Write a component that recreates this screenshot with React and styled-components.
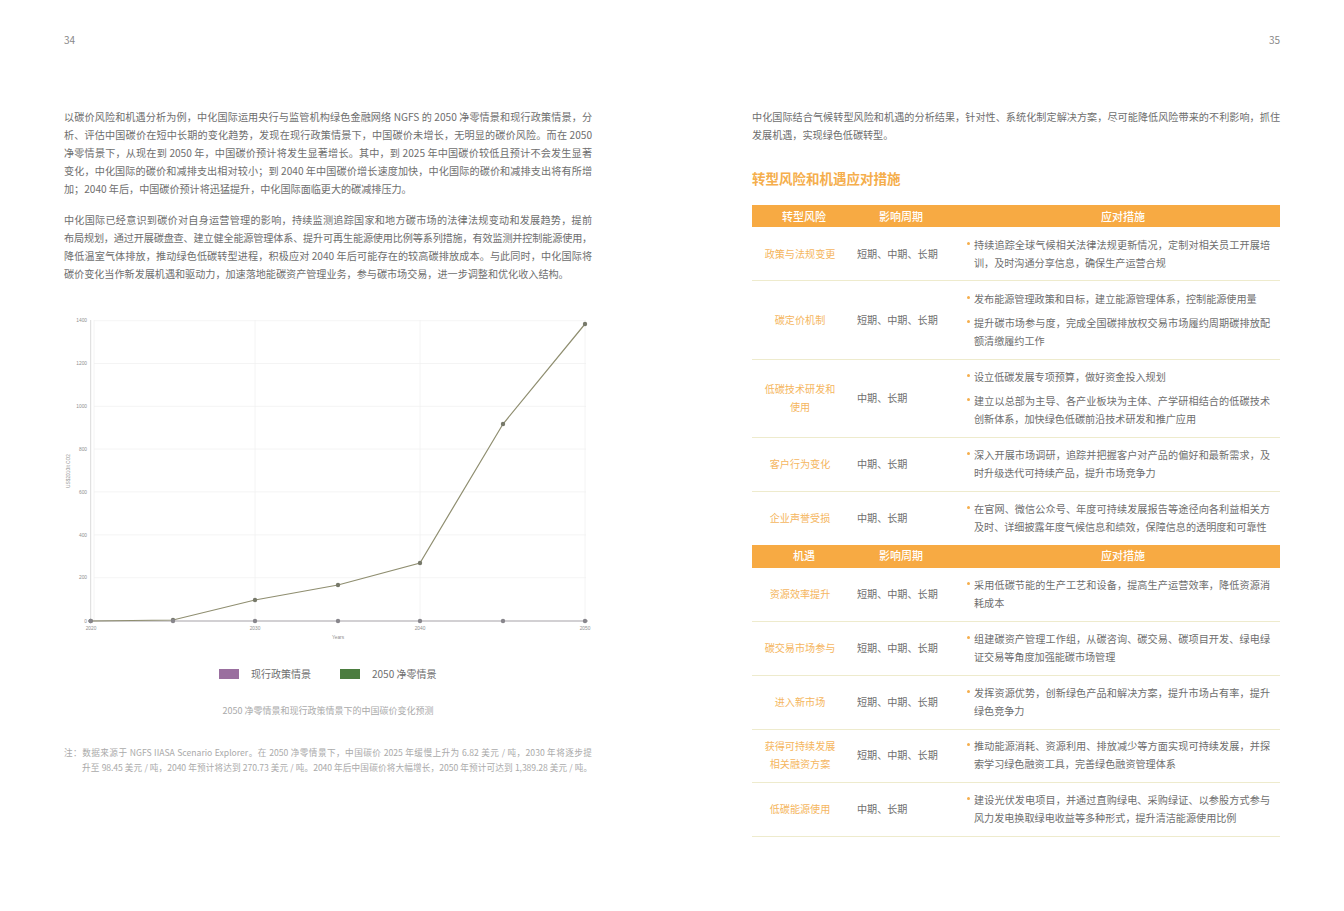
import React from "react";
import styled, { createGlobalStyle } from "styled-components";

const Global = createGlobalStyle`
  html, body { margin: 0; padding: 0; background: #fff; }
  body { font-family: "Noto Sans CJK SC", "Noto Sans", sans-serif; }
`;

const Spread = styled.div`
  display: flex;
  width: 1344px;
  height: 911px;
  overflow: hidden;
  background: #fff;
`;
const Page = styled.section`
  width: 672px;
  box-sizing: border-box;
  padding: ${(p) => (p.$right ? "32px 64px 0 80px" : "32px 80px 0 64px")};
`;
const PageNo = styled.div`
  font-size: 10px;
  line-height: 16px;
  color: #888;
  text-align: ${(p) => (p.$right ? "right" : "left")};
  margin-bottom: 60px;
`;
const Para = styled.p`
  margin: 0 0 13px;
  font-size: 10.1px;
  line-height: 18px;
  color: #6e6e6e;
  text-align: justify;
`;
const ParaLine = styled.span`
  display: block;
  letter-spacing: ${(p) => p.$track || 0}px;
  text-align-last: ${(p) => (p.$last ? "left" : "justify")};
`;
const ChartSvg = styled.svg`
  display: block;
  width: 528px;
  height: 340px;
  margin-top: 22px;
`;
const Legend = styled.div`
  display: flex;
  align-items: center;
  margin: 20px 0 0 155px;
  height: 16px;
`;
const LegendItem = styled.div`
  display: flex;
  align-items: center;
  gap: 12px;
  width: ${(p) => p.$w}px;
  font-size: 10px;
  color: #6e6e6e;
`;
const Swatch = styled.span`
  width: 20px;
  height: 10px;
  margin-top: 1px;
  background: ${(p) => p.$c};
`;
const Caption = styled.div`
  margin-top: 22px;
  font-size: 9px;
  line-height: 16px;
  color: #aaa;
  text-align: center;
`;
const Note = styled.div`
  margin-top: 26px;
  font-size: 8.65px;
  line-height: 15px;
  color: #aaa;
`;
const NoteLine = styled.div`
  padding-left: ${(p) => p.$indent}px;
  letter-spacing: ${(p) => p.$track}px;
  text-align: justify;
  text-align-last: justify;
`;
const Title = styled.h2`
  margin: 24px 0 17px;
  font-size: 13.5px;
  line-height: 20px;
  font-weight: 700;
  color: #f5ae4c;
`;
const HeadRow = styled.div`
  display: grid;
  grid-template-columns: 104px 110px 314px;
  box-sizing: border-box;
  height: ${(p) => p.$h}px;
  padding-bottom: ${(p) => p.$lift}px;
  align-items: center;
  background: #f7aa43;
  color: #fff;
  font-size: 11px;
  font-weight: 500;
  text-align: center;
`;
const HeadPeriod = styled.div`
  padding-right: 20px;
`;
const Row = styled.div`
  display: grid;
  grid-template-columns: 104px 110px 314px;
  align-items: center;
  box-sizing: border-box;
  height: ${(p) => p.$h}px;
  padding-bottom: ${(p) => p.$lift}px;
  border-bottom: ${(p) => (p.$plain ? "0" : "1px solid #eeebcd")};
  font-size: 10.1px;
  line-height: 18px;
  color: #6e6e6e;
`;
const Risk = styled.div`
  padding-right: 8px;
  color: #f5b660;
  text-align: center;
`;
const Period = styled.div`
  padding-left: 1px;
`;
const Measures = styled.div`
  display: flex;
  flex-direction: column;
  gap: 6px;
  padding-right: 10px;
`;
const Measure = styled.div`
  display: flex;
  gap: 4px;
`;
const Dot = styled.span`
  flex: none;
  width: 3px;
  height: 3px;
  margin: 6px 0 0 1px;
  border-radius: 50%;
  background: #f5ae4c;
`;
const MeasureText = styled.span`
  flex: 1;
  text-align: justify;
`;
const TickText = styled.text`
  font-size: 4.8px;
  fill: #8f8f8f;
  font-family: "Liberation Sans", sans-serif;
`;

const points = [[90.7, 621], [173, 620], [255, 600], [338, 585], [420, 563], [503, 424], [585, 324]];
const ticks = [[320.7, "1400"], [363.5, "1200"], [406.3, "1000"], [449, "800"], [491.8, "600"], [534.8, "400"], [577.7, "200"], [621, "0"]];

function Chart() {
  return (
    <ChartSvg viewBox="64 305 528 340">
      {ticks.slice(0, 7).map(([y]) => (
        <line key={y} x1="94" x2="586" y1={y} y2={y} stroke="#f1f1f1" strokeWidth="0.8" />
      ))}
      {[94, 255, 420, 585].map((x) => (
        <line key={x} x1={x} x2={x} y1="320" y2="621" stroke="#f1f1f1" strokeWidth="0.8" />
      ))}
      <line x1="90.7" x2="90.7" y1="320" y2="623" stroke="#cfcfcf" strokeWidth="0.8" />
      <line x1="88" x2="588" y1="621" y2="621" stroke="#a5a2a8" strokeWidth="1.2" />
      {ticks.map(([y, t]) => (
        <TickText key={t} x="87" y={y + 1.7} textAnchor="end">{t}</TickText>
      ))}
      {[[91, "2020"], [255, "2030"], [420, "2040"], [585, "2050"]].map(([x, t]) => (
        <TickText key={t} x={x} y="629.5" textAnchor="middle">{t}</TickText>
      ))}
      <TickText x="338" y="639" textAnchor="middle">Years</TickText>
      <TickText x="0" y="0" textAnchor="middle" transform="translate(69.5 471) rotate(-90)">US$2010/t CO2</TickText>
      <polyline points={points.map((p) => p.join(",")).join(" ")} fill="none" stroke="#8f8e70" strokeWidth="1.2" />
      {points.map(([x, y]) => (
        <circle key={x} cx={x} cy={y} r="2.2" fill="#77796a" />
      ))}
      {points.map(([x]) => (
        <circle key={x} cx={x} cy="621" r="2.2" fill="#88868c" />
      ))}
    </ChartSvg>
  );
}

const S = "短期、中期、长期";
const M = "中期、长期";
const groupA = [
  { h: 54, lift: 0, risk: ["政策与法规变更"], period: S, items: ["持续追踪全球气候相关法律法规更新情况，定制对相关员工开展培训，及时沟通分享信息，确保生产运营合规"] },
  { h: 79, lift: 0, risk: ["碳定价机制"], period: S, items: ["发布能源管理政策和目标，建立能源管理体系，控制能源使用量", "提升碳市场参与度，完成全国碳排放权交易市场履约周期碳排放配额清缴履约工作"] },
  { h: 78, lift: 2, risk: ["低碳技术研发和", "使用"], period: M, items: ["设立低碳发展专项预算，做好资金投入规划", "建立以总部为主导、各产业板块为主体、产学研相结合的低碳技术创新体系，加快绿色低碳前沿技术研发和推广应用"] },
  { h: 54, lift: 2, risk: ["客户行为变化"], period: M, items: ["深入开展市场调研，追踪并把握客户对产品的偏好和最新需求，及时升级迭代可持续产品，提升市场竞争力"] },
  { h: 53, lift: 2, plain: true, risk: ["企业声誉受损"], period: M, items: ["在官网、微信公众号、年度可持续发展报告等途径向各利益相关方及时、详细披露年度气候信息和绩效，保障信息的透明度和可靠性"] },
];
const groupB = [
  { h: 54, lift: 2, risk: ["资源效率提升"], period: S, items: ["采用低碳节能的生产工艺和设备，提高生产运营效率，降低资源消耗成本"] },
  { h: 54, lift: 2, risk: ["碳交易市场参与"], period: S, items: ["组建碳资产管理工作组，从碳咨询、碳交易、碳项目开发、绿电绿证交易等角度加强能碳市场管理"] },
  { h: 54, lift: 2, risk: ["进入新市场"], period: S, items: ["发挥资源优势，创新绿色产品和解决方案，提升市场占有率，提升绿色竞争力"] },
  { h: 53, lift: 2, risk: ["获得可持续发展", "相关融资方案"], period: S, items: ["推动能源消耗、资源利用、排放减少等方面实现可持续发展，并探索学习绿色融资工具，完善绿色融资管理体系"] },
  { h: 54, lift: 2, risk: ["低碳能源使用"], period: M, items: ["建设光伏发电项目，并通过直购绿电、采购绿证、以参股方式参与风力发电换取绿电收益等多种形式，提升清洁能源使用比例"] },
];

function TableRows({ rows }) {
  return rows.map(({ h, lift, plain, risk, period, items }) => (
    <Row key={risk[0]} $h={h} $lift={lift} $plain={plain}>
      <Risk>{risk.map((r) => <div key={r}>{r}</div>)}</Risk>
      <Period>{period}</Period>
      <Measures>
        {items.map((t) => (
          <Measure key={t}><Dot /><MeasureText>{t}</MeasureText></Measure>
        ))}
      </Measures>
    </Row>
  ));
}

function Head({ first, h, lift }) {
  return (
    <HeadRow $h={h} $lift={lift}>
      <div>{first}</div>
      <HeadPeriod>影响周期</HeadPeriod>
      <div>应对措施</div>
    </HeadRow>
  );
}

export default function App() {
  return (
    <Spread>
      <Global />
      <Page>
        <PageNo>34</PageNo>
        <Para>以碳价风险和机遇分析为例，中化国际运用央行与监管机构绿色金融网络 NGFS 的 2050 净零情景和现行政策情景，分析、评估中国碳价在短中长期的变化趋势，发现在现行政策情景下，中国碳价未增长，无明显的碳价风险。而在 2050 净零情景下，从现在到 2050 年，中国碳价预计将发生显著增长。其中，到 2025 年中国碳价较低且预计不会发生显著变化，中化国际的碳价和减排支出相对较小；到 2040 年中国碳价增长速度加快，中化国际的碳价和减排支出将有所增加；2040 年后，中国碳价预计将迅猛提升，中化国际面临更大的碳减排压力。</Para>
        <Para>
          <ParaLine>中化国际已经意识到碳价对自身运营管理的影响，持续监测追踪国家和地方碳市场的法律法规变动和发展趋势，提前</ParaLine>
          <ParaLine $track={-0.2}>布局规划，通过开展碳盘查、建立健全能源管理体系、提升可再生能源使用比例等系列措施，有效监测并控制能源使用，</ParaLine>
          <ParaLine>降低温室气体排放，推动绿色低碳转型进程，积极应对 2040 年后可能存在的较高碳排放成本。与此同时，中化国际将</ParaLine>
          <ParaLine $last>碳价变化当作新发展机遇和驱动力，加速落地能碳资产管理业务，参与碳市场交易，进一步调整和优化收入结构。</ParaLine>
        </Para>
        <Chart />
        <Legend>
          <LegendItem $w={121}><Swatch $c="#9a6f9f" />现行政策情景</LegendItem>
          <LegendItem $w={110}><Swatch $c="#4b7d3f" />2050 净零情景</LegendItem>
        </Legend>
        <Caption>2050 净零情景和现行政策情景下的中国碳价变化预测</Caption>
        <Note>
          <NoteLine $indent={0} $track={0}>注：数据来源于 NGFS IIASA Scenario Explorer。在 2050 净零情景下，中国碳价 2025 年缓慢上升为 6.82 美元 / 吨，2030 年将逐步提</NoteLine>
          <NoteLine $indent={18} $track={-0.1}>升至 98.45 美元 / 吨，2040 年预计将达到 270.73 美元 / 吨。2040 年后中国碳价将大幅增长，2050 年预计可达到 1,389.28 美元 / 吨。</NoteLine>
        </Note>
      </Page>
      <Page $right>
        <PageNo $right>35</PageNo>
        <Para>中化国际结合气候转型风险和机遇的分析结果，针对性、系统化制定解决方案，尽可能降低风险带来的不利影响，抓住发展机遇，实现绿色低碳转型。</Para>
        <Title>转型风险和机遇应对措施</Title>
        <Head first="转型风险" h={22} lift={0} />
        <TableRows rows={groupA} />
        <Head first="机遇" h={23} lift={3} />
        <TableRows rows={groupB} />
      </Page>
    </Spread>
  );
}
